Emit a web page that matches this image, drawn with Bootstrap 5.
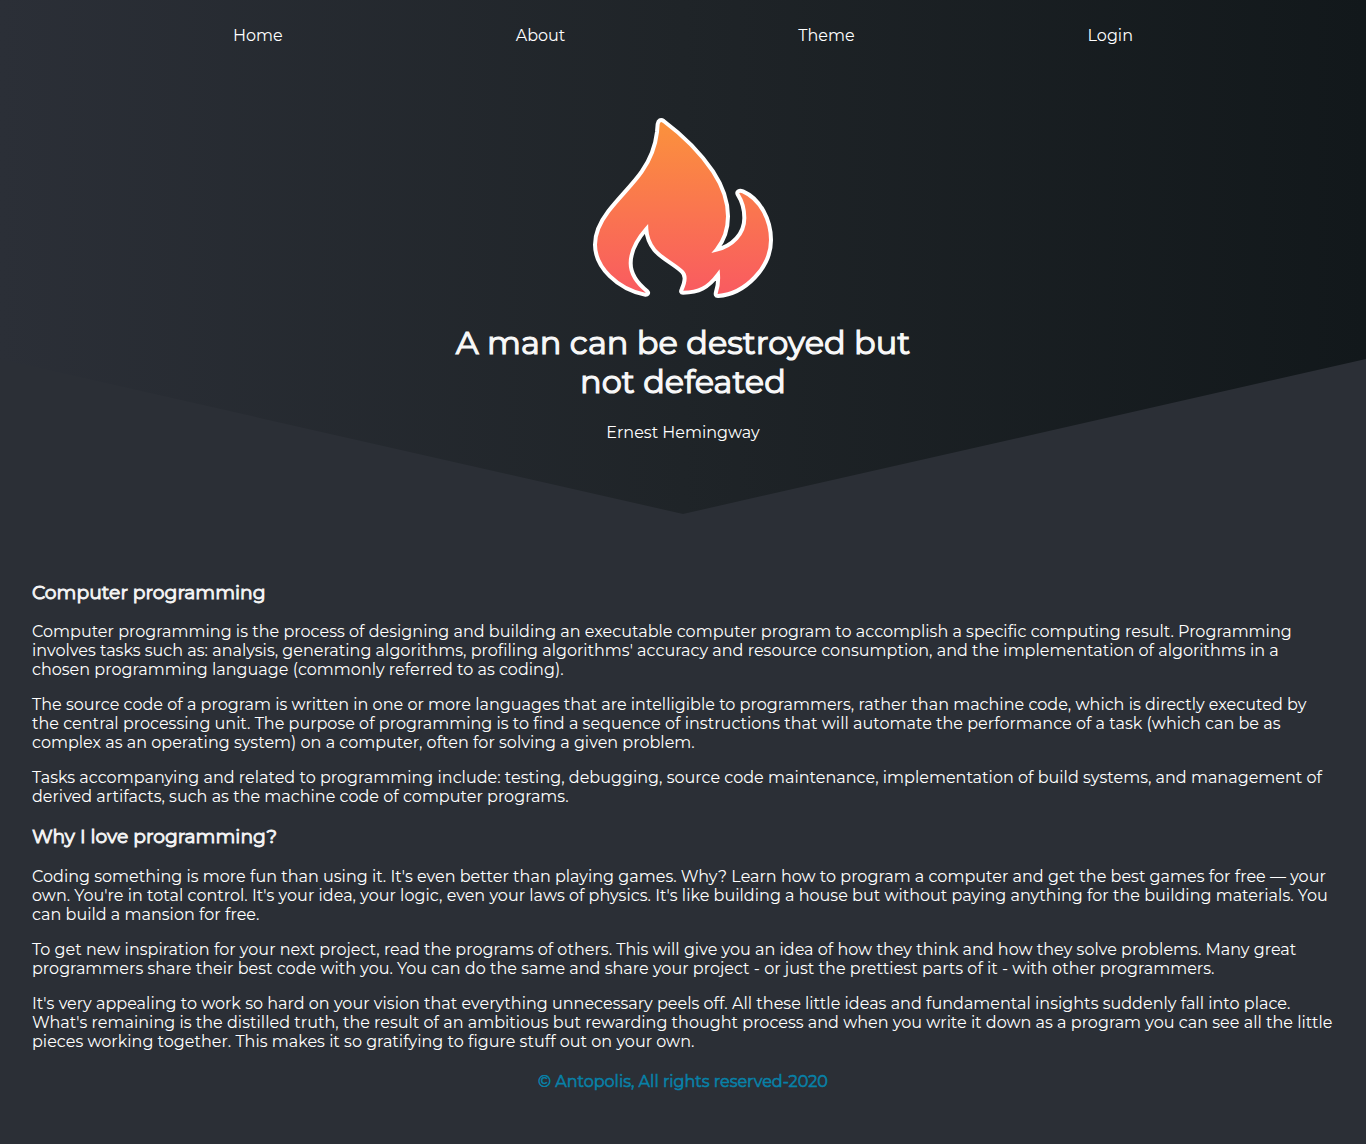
<!DOCTYPE html>
<html lang="en">
<head>
<meta charset="utf-8">
<meta name="viewport" content="width=device-width, initial-scale=1">
<title>Antopolis</title>
<link href="https://cdn.jsdelivr.net/npm/bootstrap@5.3.0/dist/css/bootstrap.min.css" rel="stylesheet">
<style>
body{background:#2b2f36;color:#fff;font-family:Montserrat,Inter,"Liberation Sans",sans-serif;font-size:16px;line-height:19px}
.hero{height:514px;background:linear-gradient(to right,#2b2f37,#1f2428 50%,#12181b);clip-path:polygon(0 0,100% 0,100% 359px,50% 100%,0 359px)}
.topnav{padding-top:26px;height:118px}
.flame{width:200px;height:200px;margin:-10px 0 15px}
.quote{width:500px;font-size:32px;line-height:39px;font-weight:400;-webkit-text-stroke:1.15px #f8f8f8;margin:0 0 22px;color:#f8f8f8}
.article{padding:67px 32px 0}
.article h3{font-size:18.72px;line-height:23px;font-weight:400;letter-spacing:.03px;-webkit-text-stroke:.9px #f5f5f5;margin:0 0 18px;color:#f5f5f5}
.article p{margin:0 0 16px;letter-spacing:.015px}
.article p+h3{margin-top:19px;margin-bottom:19px}
.article .copy{font-size:16px;line-height:19px;font-weight:400;-webkit-text-stroke:.6px #0881a8;color:#0881a8;margin:21px 0 0}
</style>
<script src="https://cdn.jsdelivr.net/npm/bootstrap@5.3.0/dist/js/bootstrap.bundle.min.js"></script>
</head>
<body>
<header class="hero d-flex flex-column align-items-center text-center">
<nav class="topnav w-100 d-flex justify-content-evenly align-items-start flex-shrink-0">
<a class="text-white text-decoration-none" href="#">Home</a>
<a class="text-white text-decoration-none" href="#">About</a>
<a class="text-white text-decoration-none" href="#">Theme</a>
<a class="text-white text-decoration-none" href="#">Login</a>
</nav>
<svg class="flame flex-shrink-0" viewBox="0 0 600 600" aria-hidden="true">
<defs><linearGradient id="fire" x1="0" y1="0" x2="0" y2="1"><stop offset="0" stop-color="#fb923c"/><stop offset="1" stop-color="#f95a61"/></linearGradient></defs>
<path fill="url(#fire)" stroke="#fff" stroke-width="12" stroke-miterlimit="10" d="M242 39C297 80 350 131 390 190C417 231 435 280 435 325C435 366 423 398 401 425C448 413 484 378 484 330C484 304 475 276 464 259C460 250 469 246 480 250C531 272 564 335 564 396C564 478 487 558 405 564C398 564 397 559 399 552Q407 528 405 500C376 539 348 554 300 554C294 554 293 550 296 544C305 524 309 502 297 491C270 467 234 450 214 426C198 406 191 386 190 363C161 396 143 432 143 466C143 502 164 527 193 550C198 555 194 562 185 560C104 543 36 479 36 410C36 374 50 344 76 310C106 270 149 230 176 191C203 153 217 115 222 72L224 48C226 37 233 33 242 39Z"/>
</svg>
<h1 class="quote">A man can be destroyed but not defeated</h1>
<div>Ernest Hemingway</div>
</header>
<main class="article">
<h3>Computer programming</h3>
<p>Computer programming is the process of designing and building an executable computer program to accomplish a specific computing result. Programming involves tasks such as: analysis, generating algorithms, profiling algorithms' accuracy and resource consumption, and the implementation of algorithms in a chosen programming language (commonly referred to as coding).</p>
<p>The source code of a program is written in one or more languages that are intelligible to programmers, rather than machine code, which is directly executed by the central processing unit. The purpose of programming is to find a sequence of instructions that will automate the performance of a task (which can be as complex as an operating system) on a computer, often for solving a given problem.</p>
<p>Tasks accompanying and related to programming include: testing, debugging, source code maintenance, implementation of build systems, and management of derived artifacts, such as the machine code of computer programs.</p>
<h3>Why I love programming?</h3>
<p>Coding something is more fun than using it. It's even better than playing games. Why? Learn how to program a computer and get the best games for free — your own. You're in total control. It's your idea, your logic, even your laws of physics. It's like building a house but without paying anything for the building materials. You can build a mansion for free.</p>
<p>To get new inspiration for your next project, read the programs of others. This will give you an idea of how they think and how they solve problems. Many great programmers share their best code with you. You can do the same and share your project - or just the prettiest parts of it - with other programmers.</p>
<p>It's very appealing to work so hard on your vision that everything unnecessary peels off. All these little ideas and fundamental insights suddenly fall into place. What's remaining is the distilled truth, the result of an ambitious but rewarding thought process and when you write it down as a program you can see all the little pieces working together. This makes it so gratifying to figure stuff out on your own.</p>
<h4 class="copy text-center">© Antopolis, All rights reserved-2020</h4>
</main>
</body>
</html>
